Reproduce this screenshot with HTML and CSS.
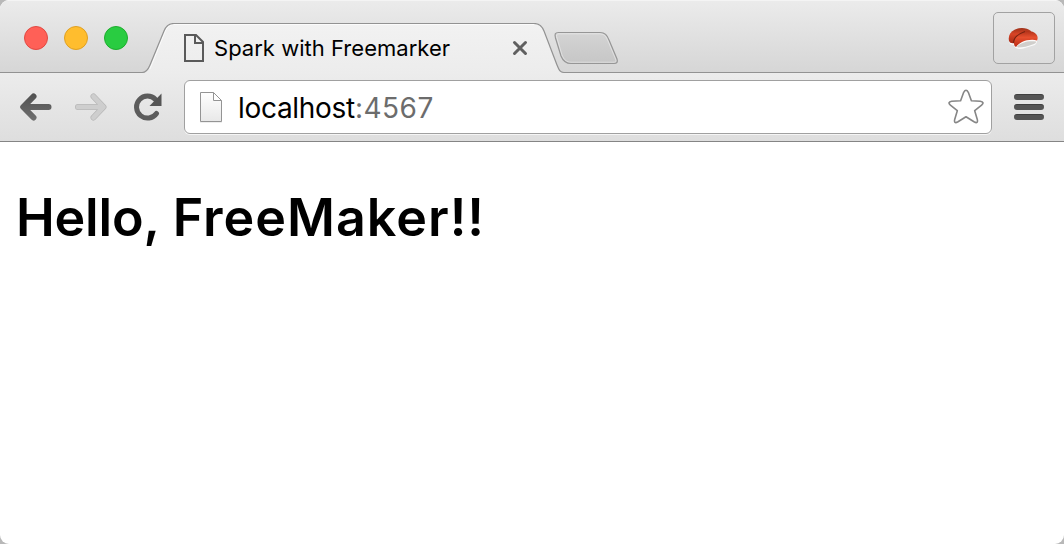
FILE: index.html
```html
<!DOCTYPE html>
<html lang="en">
<head>
<meta charset="utf-8">
<title>Spark with Freemarker</title>
<link rel="stylesheet" href="styles.css">
</head>
<body>
<div class="window">
  <header class="tabstrip">
    <div class="lights"><i class="light red"></i><i class="light yellow"></i><i class="light green"></i></div>
    <div class="tab">
      <svg class="tab-shape" width="424" height="51" viewBox="0 0 424 51">
        <defs><linearGradient id="tabfill" x1="0" y1="0" x2="0" y2="1"><stop offset="0" stop-color="#f2f2f2"/><stop offset="1" stop-color="#ececec"/></linearGradient></defs>
        <path d="M0 51V49.500C4 49.500 6 47 8 42L22 8C24 3 27 .5 32 .5H392C397 .5 400 3 402 8L415 42C417 47 418 49.500 422 49.500V51Z" fill="url(#tabfill)"/>
        <path d="M8 46L23 9C25 4 28 1.500 32 1.500H392" fill="none" stroke="#fff" stroke-opacity=".7"/>
        <path d="M0 49.500C4 49.500 6 47 8 42L22 8C24 3 27 .5 32 .5H392C397 .5 400 3 402 8L415 42C417 47 418 49.500 422 49.500" fill="none" stroke="#929292" stroke-width="1.200"/>
      </svg>
      <svg class="tab-page" width="20" height="28" viewBox="0 0 20 28"><path d="M1 1H12L19 8V27H1ZM11 1V9H19" fill="none" stroke="#5a5a5a" stroke-width="2"/></svg>
      <span class="tab-title">Spark with Freemarker</span>
      <svg class="tab-close" width="16" height="16" viewBox="0 0 16 16"><path d="M2.500 2.500L13.500 13.500M13.500 2.500L2.500 13.500" stroke="#606060" stroke-width="3" stroke-linecap="round"/></svg>
    </div>
    <svg class="new-tab" width="66" height="34" viewBox="0 0 66 34">
      <defs><linearGradient id="newfill" x1="0" y1="0" x2="0" y2="1"><stop offset="0" stop-color="#d4d4d4"/><stop offset="1" stop-color="#c6c6c6"/></linearGradient></defs>
      <path d="M5.500 1.500H47C52 1.500 54 4 56 9L64 28C65 31 64 32.500 61 32.500H18C13 32.500 10 30 8 25L2.500 7C1.500 3 2 1.500 5.500 1.500Z" fill="url(#newfill)" stroke="#969696" stroke-width="1.200"/>
      <path d="M6 2.800H46C51 2.800 53 5 55 10L62.500 28C63.400 30.500 63 31.200 60 31.200H18C14 31.200 11 29 9 24L4 7C3 4 3.500 2.800 6 2.800Z" fill="none" stroke="#fff" stroke-opacity=".4"/>
    </svg>
    <div class="profile">
      <svg width="32" height="24" viewBox="0 0 32 24">
        <defs>
          <linearGradient id="fish-back" x1="0" y1="0" x2="0" y2="1"><stop offset="0" stop-color="#9d3119"/><stop offset=".4" stop-color="#d84426"/><stop offset="1" stop-color="#a52a17"/></linearGradient>
          <linearGradient id="fish-front" x1="0" y1="0" x2="0" y2="1"><stop offset="0" stop-color="#b03219"/><stop offset=".4" stop-color="#e64f2e"/><stop offset="1" stop-color="#ba2c16"/></linearGradient>
        </defs>
        <path d="M2 13L3 18L7 19L8 21.500Q12 24 18 22L28 19Q31 16 30 11Z" fill="#fafafa"/>
        <path d="M2 15C1 10 3 6 8 3.500C13 1 20 1.500 24 5L23 9L8 17Q3 18 2 15Z" fill="url(#fish-back)"/>
        <path d="M7 18C6.500 13 10 9 14 7C19 4 26 4.500 29 8C31 10.500 31 12.500 30 14.500C26 13 19 14 15 16C12 17.500 10 19.500 9 21Q7 20 7 18Z" fill="url(#fish-front)"/>
        <path d="M6.500 17C6.500 12 11 8 18 5.500" fill="none" stroke="#762311" stroke-width="1.200"/>
        <path d="M10 20.500C14 16.500 21 14.500 29 15.500Q29.500 17 27 18Q18 21.500 11 21.500Z" fill="#d0cecb"/>
      </svg>
    </div>
  </header>
  <nav class="toolbar">
    <svg class="back" width="32" height="28" viewBox="0 0 32 28">
      <defs><linearGradient id="dark" x1="0" y1="0" x2="0" y2="28" gradientUnits="userSpaceOnUse"><stop offset="0" stop-color="#505050"/><stop offset="1" stop-color="#707070"/></linearGradient></defs>
      <path d="M28.500 14.010H4M13.500 3.500L3.200 14L13.500 24.500" fill="none" stroke="url(#dark)" stroke-width="6" stroke-linecap="round" stroke-linejoin="round"/></svg>
    <svg class="forward" width="32" height="28" viewBox="0 0 32 28">
      <path d="M3 14H28M18.500 3.500L28.500 14L18.500 24.500" fill="none" stroke="#b8b8b8" stroke-width="6" stroke-linecap="round" stroke-linejoin="round"/>
      <path d="M3 14H28M18.500 3.500L28.500 14L18.500 24.500" fill="none" stroke="#cecece" stroke-width="4.600" stroke-linecap="round" stroke-linejoin="round"/></svg>
    <svg class="reload" width="28" height="28" viewBox="0 0 28 28"><path d="M22.500 20.500A11 11 0 1 1 21.500 6.500" fill="none" stroke="#5c5c5c" stroke-width="5" stroke-linecap="round"/><path d="M27.500 .5V13H15.500Z" fill="#555"/></svg>
    <div class="omnibox">
      <svg class="url-page" width="24" height="32" viewBox="0 0 24 32">
        <defs><linearGradient id="paper" x1="0" y1="0" x2="0" y2="1"><stop offset="0" stop-color="#fff"/><stop offset="1" stop-color="#e8e8e8"/></linearGradient></defs>
        <path d="M1 31H23" stroke="#ddd"/><path d="M1.500 1.500H14.500L22.500 9.500V30.500H1.500ZM14.500 1.500V9.500H22.500" fill="url(#paper)" stroke="#949494"/></svg>
      <span class="url">localhost<span class="port">:4567</span></span>
      <svg class="star" width="36" height="36" viewBox="0 0 36 36"><path d="M15.700 3.300Q18 -.7 20.300 3.300L23.400 11.800L32.300 12.300Q37 13.200 33.600 16.200L26.700 21.700L29.300 30.400Q30.300 35.200 26 32.800L18 27.800L10 32.800Q5.700 35.200 6.700 30.400L9.300 21.700L2.400 16.200Q-1 13.200 3.700 12.300L12.600 11.800Z" fill="#fff" stroke="#868686" stroke-width="1.600" stroke-linejoin="round"/></svg>
    </div>
    <div class="menu"><i></i><i></i><i></i></div>
  </nav>
  <main class="page"><h1>Hello, <span class="name">FreeMaker!!</span></h1></main>
</div>
</body>
</html>
```
FILE: styles.css
```css
* { box-sizing: border-box; }
body { margin: 0; background: #b8b8b8; font-family: Inter, "Liberation Sans", sans-serif; color: #000; }
svg { display: block; flex: none; }
.window { height: 544px; border-radius: 9px; overflow: hidden; background: #fff; display: flex; flex-direction: column; }
.tabstrip { height: 73px; flex: none; display: flex; align-items: flex-start; background: linear-gradient(#ebebeb, #d6d6d6); border-top: 1px solid #f4f4f4; border-bottom: 1px solid #929292; }
.lights { display: flex; gap: 16px; padding: 25px 0 0 24px; width: 143px; }
.light { width: 24px; height: 24px; border-radius: 50%; border: 1px solid; }
.red { background: #ff6057; border-color: #e14942; }
.yellow { background: #ffbd2e; border-color: #dfa023; }
.green { background: #29cc41; border-color: #1dad2d; }
.tab { position: relative; width: 424px; height: 51px; margin-top: 22px; display: flex; align-items: center; padding: 0 0 1px 41px; }
.tab-shape { position: absolute; left: -1px; top: 0; }
.tab-page, .tab-title, .tab-close { position: relative; }
.tab-title { margin-left: 10px; width: 298px; font-size: 22px; letter-spacing: .02px; white-space: nowrap; }
.new-tab { margin: 30px 0 0 -14px; }
.profile { width: 62px; height: 52px; margin: 11px 9px 0 auto; padding-right: 2px; border: 1px solid #a2a2a2; border-radius: 5px; display: flex; align-items: center; justify-content: center; background: linear-gradient(#e8e8e8, #dcdcdc); }
.toolbar { height: 69px; flex: none; display: flex; align-items: center; padding: 0 19px 1px 20px; background: linear-gradient(#ececec, #dedede); border-bottom: 1px solid #858585; }
.forward { margin-left: 23px; }
.reload { margin-left: 27px; }
.omnibox { width: 808px; height: 54px; margin-left: 22px; border: 1px solid #a0a0a0; border-radius: 6px; background: #fff; box-shadow: 0 1px #f5f5f5; display: flex; align-items: center; padding: 0 7px 0 14px; }
.url { margin-left: 15px; padding-top: 2px; font-size: 28px; white-space: nowrap; letter-spacing: -.3px; }
.port { color: #6c6c6c; letter-spacing: .5px; }
.star { margin-left: auto; }
.menu { width: 30px; margin-left: auto; margin-right: 1px; display: grid; gap: 4px; }
.menu i { height: 6px; border-radius: 3px; background: #555; border-top: 1px solid #404040; }
.page { flex: 1; padding: 0 16px; }
h1 { margin: 44px 0 0; font-size: 52px; line-height: 64px; font-weight: 600; letter-spacing: -.2px; word-spacing: 1px; white-space: nowrap; }
.name { letter-spacing: 1px; }
```
